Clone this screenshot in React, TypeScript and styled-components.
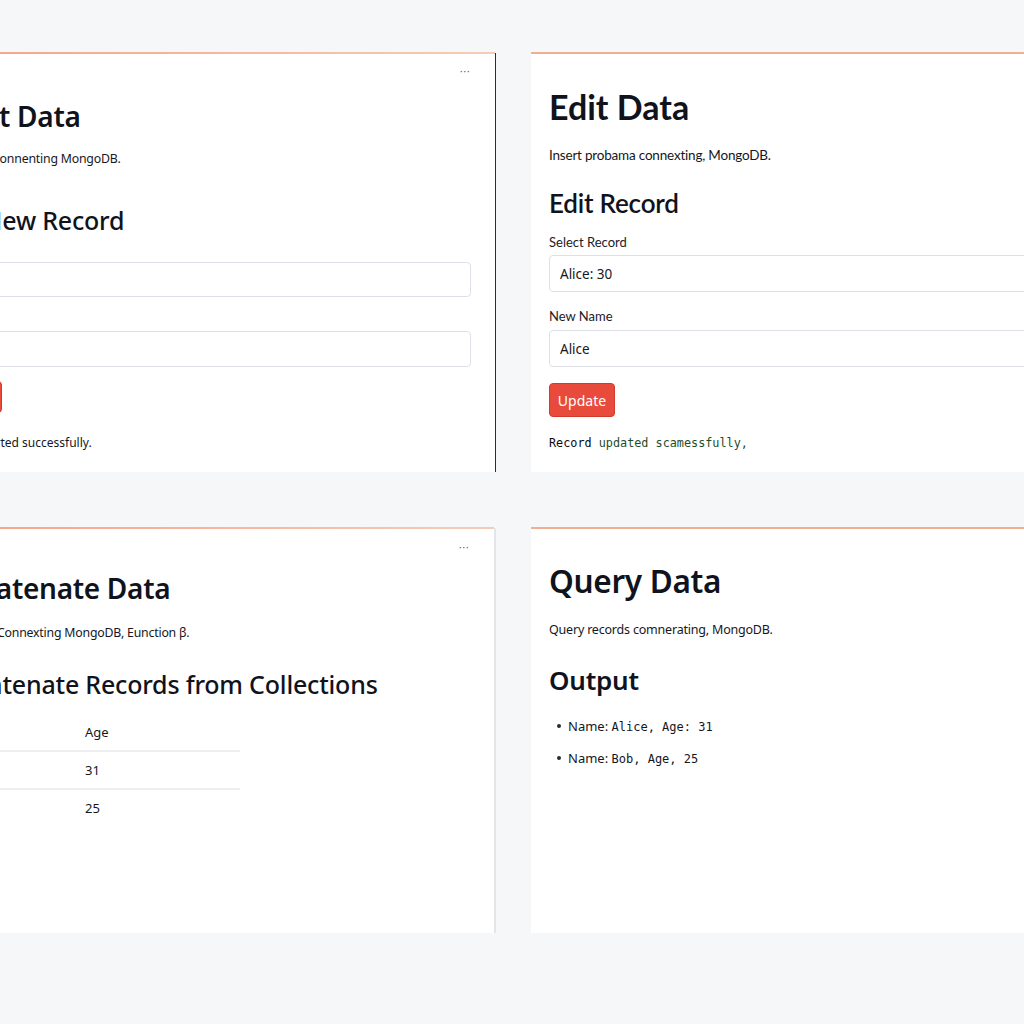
import React from "react";
import styled, { createGlobalStyle } from "styled-components";

const Global = createGlobalStyle`
  html, body {
    margin: 0;
    padding: 0;
    overflow: hidden;
    background: #f6f7f9;
    width: 1024px;
    height: 1024px;
  }
  * { box-sizing: border-box; }
`;

const Page = styled.div`
  width: 1024px;
  height: 1024px;
  overflow: hidden;
  background: #f6f7f9;
  font-family: "Noto Sans", "Open Sans", sans-serif;
  color: #111318;
`;

const Grid = styled.div`
  display: grid;
  grid-template-columns: 584px 584px;
  grid-template-rows: 419px 405px;
  column-gap: 35px;
  row-gap: 56px;
  margin-left: -88px;
  padding-top: 53px;
`;

const Panel = styled.section<{ $edge: "dark" | "light" | "none"; $warm?: boolean; $pt: number }>`
  position: relative;
  background: #ffffff;
  padding: ${(p) => p.$pt}px 24px 0 18px;
  border-right: ${(p) =>
    p.$edge === "dark" ? "1.5px solid #2a2c33" : p.$edge === "light" ? "2px solid #e3e5e9" : "none"};
  display: flex;
  flex-direction: column;
  &::before {
    content: "";
    position: absolute;
    left: 0;
    right: 0;
    top: -1px;
    height: 2px;
    background: ${(p) =>
      p.$warm
        ? "linear-gradient(90deg, #f6a08a 0%, #f7b9a2 60%, #f3cdb8 100%)"
        : "linear-gradient(90deg, #f2ad92 0%, #f0b090 100%)"};
  }
`;

const MenuRow = styled.div`
  display: flex;
  justify-content: flex-end;
  height: 16px;
  align-items: center;
  padding-right: 1px;
`;

const Dots = styled.span`
  font-family: "DejaVu Sans", sans-serif;
  font-size: 11px;
  color: #5f6473;
  line-height: 1;
`;

const Title = styled.h1<{ $size: number; $mt: number; $font?: string; $weight?: number; $ls?: number }>`
  margin: ${(p) => p.$mt}px 0 0 0;
  font-family: ${(p) => p.$font || `"Noto Sans", "Open Sans", sans-serif`};
  font-size: ${(p) => p.$size}px;
  font-weight: ${(p) => p.$weight || 600};
  line-height: 1.2;
  color: #10131c;
  white-space: nowrap;
  letter-spacing: ${(p) => (p.$ls !== undefined ? p.$ls : -0.3)}px;
`;

const Heading = styled.h2<{ $size: number; $mt: number; $font?: string; $weight?: number }>`
  margin: ${(p) => p.$mt}px 0 0 0;
  font-family: ${(p) => p.$font || `"Noto Sans", "Open Sans", sans-serif`};
  font-size: ${(p) => p.$size}px;
  font-weight: ${(p) => p.$weight || 500};
  line-height: 1.25;
  color: #10131c;
  white-space: nowrap;
  letter-spacing: -0.2px;
`;

const Sub = styled.p<{ $mt: number; $font?: string; $size?: number }>`
  margin: ${(p) => p.$mt}px 0 0 0;
  font-family: ${(p) => p.$font || `"Noto Sans", sans-serif`};
  font-size: ${(p) => p.$size || 12.5}px;
  line-height: 20px;
  color: #15171c;
  white-space: nowrap;
  letter-spacing: -0.2px;
`;

const Label = styled.label<{ $mt: number }>`
  display: block;
  margin: ${(p) => p.$mt}px 0 0 0;
  font-family: "Lato", "Noto Sans", sans-serif;
  font-size: 13px;
  line-height: 18px;
  color: #1d2028;
`;

const Field = styled.input<{ $mt: number; $h: number }>`
  display: block;
  width: 100%;
  height: ${(p) => p.$h}px;
  margin: ${(p) => p.$mt}px 0 0 0;
  padding: 0 10px;
  border: 1.5px solid #dde1e7;
  border-radius: 4px;
  background: #fff;
  font-family: "Noto Sans", sans-serif;
  font-size: 13.5px;
  color: #15171c;
  outline: none;
`;

const Button = styled.button<{ $mt: number; $w: number; $h: number }>`
  align-self: flex-start;
  margin: ${(p) => p.$mt}px 0 0 0;
  width: ${(p) => p.$w}px;
  height: ${(p) => p.$h}px;
  background: #e84b3c;
  border: 1px solid #d43a2c;
  border-radius: 4px;
  color: #ffffff;
  font-family: "Noto Sans", sans-serif;
  font-size: 14px;
  padding: 0;
  cursor: pointer;
`;

const Message = styled.p<{ $mt: number }>`
  margin: ${(p) => p.$mt}px 0 0 0;
  font-family: "Noto Sans", sans-serif;
  font-size: 12px;
  line-height: 18px;
  color: #15171c;
  white-space: nowrap;
`;

const MonoMessage = styled.p<{ $mt: number }>`
  margin: ${(p) => p.$mt}px 0 0 0;
  font-family: "DejaVu Sans Mono", "Liberation Mono", monospace;
  font-size: 11.8px;
  line-height: 18px;
  color: #0a0c10;
  white-space: nowrap;
`;

const Green = styled.span`
  color: #1f4d2b;
`;

const Table = styled.table`
  margin-top: 14px;
  width: 310px;
  border-collapse: collapse;
  font-family: "Noto Sans", sans-serif;
  font-size: 13px;
  color: #15171c;
`;

const Th = styled.th<{ $w?: number }>`
  text-align: left;
  font-weight: 400;
  height: 37px;
  padding: 0 10px;
  width: ${(p) => (p.$w ? `${p.$w}px` : "auto")};
  border-bottom: 2px solid #eceef1;
`;

const Td = styled.td<{ $last?: boolean }>`
  height: 38px;
  padding: 0 10px;
  border-bottom: ${(p) => (p.$last ? "none" : "2px solid #eceef1")};
`;

const List = styled.ul`
  margin: 20px 0 0 0;
  padding: 0 0 0 8px;
  list-style: none;
  display: flex;
  flex-direction: column;
  gap: 12px;
`;

const Item = styled.li`
  display: flex;
  align-items: center;
  gap: 7px;
  height: 20px;
  font-family: "Noto Sans", sans-serif;
  font-size: 13px;
  color: #15171c;
  white-space: nowrap;
  &::before {
    content: "";
    width: 4px;
    height: 4px;
    border-radius: 50%;
    background: #2a2c33;
  }
`;

const Mono = styled.span`
  font-family: "DejaVu Sans Mono", "Liberation Mono", monospace;
  font-size: 12px;
`;

const LATO = `"Lato", "Noto Sans", sans-serif`;

export default function App() {
  return (
    <Page>
      <Global />
      <Grid>
        <Panel $edge="dark" $warm $pt={10}>
          <MenuRow>
            <Dots>···</Dots>
          </MenuRow>
          <Title $size={28} $mt={21}>Insert Data</Title>
          <Sub $mt={15} $size={12.3}>Insert data connenting MongoDB.</Sub>
          <Heading $size={25} $mt={36}>Add New Record</Heading>
          <Label $mt={4}>Name</Label>
          <Field $mt={4} $h={35} readOnly defaultValue="" />
          <Label $mt={12}>Age</Label>
          <Field $mt={4} $h={36} readOnly defaultValue="" />
          <Button $mt={14} $w={72} $h={32}>Insert</Button>
          <Message $mt={21}>Record inserted successfully.</Message>
        </Panel>

        <Panel $edge="none" $pt={34}>
          <Title $size={34} $mt={0} $font={LATO} $weight={700} $ls={0}>Edit Data</Title>
          <Sub $mt={17} $font={LATO} $size={13.5}>Insert probama connexting, MongoDB.</Sub>
          <Heading $size={26} $mt={22} $font={LATO} $weight={600}>
            Edit Record
          </Heading>
          <Label $mt={14}>Select Record</Label>
          <Field $mt={4} $h={37} readOnly defaultValue="Alice: 30" />
          <Label $mt={15}>New Name</Label>
          <Field $mt={5} $h={37} readOnly defaultValue="Alice" />
          <Button $mt={16} $w={66} $h={34}>Update</Button>
          <MonoMessage $mt={17}>
            Record <Green>updated scamessfully,</Green>
          </MonoMessage>
        </Panel>

        <Panel $edge="light" $warm $pt={11}>
          <MenuRow>
            <Dots>···</Dots>
          </MenuRow>
          <Title $size={28} $mt={17}>Concatenate Data</Title>
          <Sub $mt={17} $size={12.3}>Concatenat Connexting MongoDB, Eunction β.</Sub>
          <Heading $size={25} $mt={26}>Concatenate Records from Collections</Heading>
          <Table>
            <thead>
              <tr>
                <Th $w={145}>Name</Th>
                <Th>Age</Th>
              </tr>
            </thead>
            <tbody>
              <tr>
                <Td>Alice</Td>
                <Td>31</Td>
              </tr>
              <tr>
                <Td $last>Bob</Td>
                <Td $last>25</Td>
              </tr>
            </tbody>
          </Table>
        </Panel>

        <Panel $edge="none" $pt={34}>
          <Title $size={31.5} $mt={0}>Query Data</Title>
          <Sub $mt={20}>Query records comnerating, MongoDB.</Sub>
          <Heading $size={26} $mt={24} $weight={600}>Output</Heading>
          <List>
            <Item>
              <span>
                Name: <Mono>Alice, Age: 31</Mono>
              </span>
            </Item>
            <Item>
              <span>
                Name: <Mono>Bob, Age, 25</Mono>
              </span>
            </Item>
          </List>
        </Panel>
      </Grid>
    </Page>
  );
}
